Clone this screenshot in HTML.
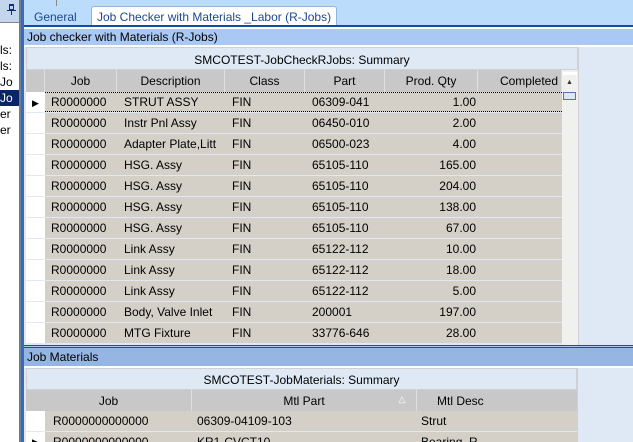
<!DOCTYPE html><html><head><style>
*{margin:0;padding:0;box-sizing:border-box}
html,body{width:633px;height:442px;overflow:hidden}
body{background:#dfe9f5;font-family:"Liberation Sans",Arial,sans-serif;font-size:12px;color:#000;position:relative}
.a{position:absolute}
.row{position:absolute;left:26px;height:21px;width:536px;overflow:hidden}
.row div{position:absolute;top:0;height:20px;line-height:20px;background:#d4d0c8;white-space:nowrap;overflow:hidden}
.row .sel{left:0;width:19px;background:#fff}
.hd div{position:absolute;top:0;height:22px;line-height:22px;background:#c8c8c8;border-right:1px solid #e0e0e0;text-align:center}
.lp div{height:16px;white-space:nowrap;padding-left:0}
</style></head><body>
<div class="a" style="left:0;top:0;width:20px;height:442px;background:#fff"></div>
<div class="a" style="left:0;top:0;width:20px;height:22px;background:#c3d6ee"></div>
<div class="a" style="left:9px;top:4px;width:5px;height:6px;border:1px solid #0b2f7a;border-top-width:2px"></div>
<div class="a" style="left:7px;top:10px;width:9px;height:1px;background:#0b2f7a"></div>
<div class="a" style="left:11px;top:11px;width:1px;height:4px;background:#0b2f7a"></div>
<div class="a" style="left:0;top:22px;width:20px;height:1px;background:#888"></div>
<div class="a lp" style="left:0;top:42px;font-size:12px;line-height:16px;width:19px;overflow:hidden;">
<div>ls:</div><div>ls:</div><div>Jo</div><div style="background:#0a246a;color:#fff">Jo</div><div>er</div><div>er</div></div>
<div class="a" style="left:19px;top:0;width:2px;height:442px;background:#6d7d92"></div>
<div class="a" style="left:21px;top:0;width:3px;height:442px;background:#3a6ac0"></div>
<div class="a" style="left:24px;top:0;width:2px;height:442px;background:#dfe9f5"></div>
<div class="a" style="left:24px;top:0;width:609px;height:26px;background:#bcdcfc"></div>
<div class="a" style="left:56px;top:0;width:1px;height:6px;background:#888"></div>
<div class="a" style="left:28px;top:10px;width:62px;height:16px;color:#1c4790;padding-left:6px;font-size:12px">General</div>
<div class="a" style="left:91px;top:6px;width:246px;height:21px;background:#fff;border:1px solid #8fb4e0;border-bottom:none;border-radius:3px 3px 0 0;color:#1c4790;padding-left:5px;line-height:20px">Job Checker with Materials _Labor (R-Jobs)</div>
<div class="a" style="left:24px;top:25px;width:609px;height:2px;background:#0b4fa5"></div>
<div class="a" style="left:24px;top:27px;width:609px;height:2px;background:#fff"></div>
<div class="a" style="left:24px;top:29px;width:609px;height:16px;background:#a9c8f3;line-height:16px;padding-left:3px">Job checker with Materials (R-Jobs)</div>
<div class="a" style="left:24px;top:45px;width:609px;height:2px;background:#fff"></div>
<div class="a" style="left:26px;top:47px;width:552px;height:23px;background:#dfe9f5;border:1px solid #d0d0d0;text-align:center;line-height:24px">SMCOTEST-JobCheckRJobs: Summary</div>
<div class="row hd" style="top:70px;height:22px">
<div style="left:0;width:19px;background:#c8c8c8"></div>
<div style="left:19px;width:72px">Job</div>
<div style="left:91px;width:108px">Description</div>
<div style="left:199px;width:80px">Class</div>
<div style="left:279px;width:80px">Part</div>
<div style="left:359px;width:93px">Prod. Qty</div>
<div style="left:452px;width:84px;text-align:right;padding-right:3px">Completed</div>
</div>
<div class="a" style="left:562px;top:70px;width:16px;height:275px;background:#f0f0ee"></div>
<div class="a" style="left:563px;top:72px;width:14px;height:3px;background:#fff"></div>
<div class="a" style="left:566px;top:79px;font-size:7px;color:#333">▲</div>
<div class="a" style="left:563px;top:92px;width:13px;height:8px;border:1px solid #5575a8;background:#dde6f2"></div>
<div id="g1"></div>
<div class="a" style="left:578px;top:47px;width:1px;height:298px;background:#d0d0d0"></div>
<div class="a" style="left:24px;top:345px;width:609px;height:1px;background:#1a4f9a"></div>
<div class="a" style="left:24px;top:346px;width:609px;height:1px;background:#b0c8e8"></div>
<div class="a" style="left:24px;top:347px;width:609px;height:1px;background:#1a4f9a"></div>
<div class="a" style="left:24px;top:348px;width:609px;height:18px;background:#95b5e2;line-height:18px;padding-left:3px">Job Materials</div>
<div class="a" style="left:24px;top:366px;width:609px;height:2px;background:#fff"></div>
<div class="a" style="left:26px;top:368px;width:551px;height:22px;background:#dfe9f5;border:1px solid #d0d0d0;text-align:center;line-height:22px">SMCOTEST-JobMaterials: Summary</div>
<div class="row hd" style="top:390px;width:551px;height:21px">
<div style="left:0;width:166px">Job</div>
<div style="left:166px;width:225px">Mtl Part</div>
<div style="left:370px;top:0;height:20px;width:12px;font-size:9px;line-height:18px;background:none;border:none;color:#fff">△</div>
<div style="left:391px;width:160px;text-align:left;padding-left:20px;border:none">Mtl Desc</div>
</div>
<div class="row" style="top:411px;width:551px">
<div class="sel"></div><div style="left:19px;width:147px;padding-left:8px">R0000000000000</div>
<div style="left:166px;width:225px;padding-left:5px">06309-04109-103</div>
<div style="left:391px;width:160px;padding-left:4px">Strut</div></div>
<div class="row" style="top:432px;width:551px">
<div class="sel"></div><div style="left:6px;width:6px;background:none;font-size:9px">▶</div><div style="left:19px;width:147px;padding-left:8px">R0000000000000</div>
<div style="left:166px;width:225px;padding-left:5px">KR1-CVCT10</div>
<div style="left:391px;width:160px;padding-left:4px">Bearing, R</div></div>
<div class="a" style="left:577px;top:368px;width:1px;height:74px;background:#d0d0d0"></div>
<script>
var d=[["STRUT ASSY","06309-041","1.00"],["Instr Pnl Assy","06450-010","2.00"],["Adapter Plate,Litt","06500-023","4.00"],["HSG. Assy","65105-110","165.00"],["HSG. Assy","65105-110","204.00"],["HSG. Assy","65105-110","138.00"],["HSG. Assy","65105-110","67.00"],["Link Assy","65122-112","10.00"],["Link Assy","65122-112","18.00"],["Link Assy","65122-112","5.00"],["Body, Valve Inlet","200001","197.00"],["MTG Fixture","33776-646","28.00"]];
var h="";d.forEach(function(r,i){var t=92+i*21;var hh=(i==11)?(343-t):21;h+='<div class="row" style="top:'+t+'px;height:'+hh+'px"><div class="sel">'+(i==0?'<span style="font-size:9px;padding-left:6px">▶</span>':'')+'</div><div style="left:19px;width:517px;background:#d4d0c8'+(i==0?';border-top:1px dotted #000;border-bottom:1px dotted #000':'')+'"></div><div style="left:25px;width:80px;background:none">R0000000</div><div style="left:98px;width:105px;background:none">'+r[0]+'</div><div style="left:206px;width:70px;background:none">FIN</div><div style="left:286px;width:80px;background:none">'+r[1]+'</div><div style="left:370px;width:80px;background:none;text-align:right">'+r[2]+'</div></div>';});
document.getElementById("g1").innerHTML=h;
</script>
</body></html>
